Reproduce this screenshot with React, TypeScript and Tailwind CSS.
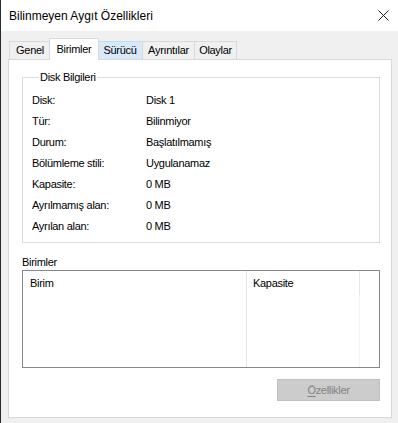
import React from "react";

const rows: [string, string][] = [
  ["Disk:", "Disk 1"],
  ["Tür:", "Bilinmiyor"],
  ["Durum:", "Başlatılmamış"],
  ["Bölümleme stili:", "Uygulanamaz"],
  ["Kapasite:", "0 MB"],
  ["Ayrılmamış alan:", "0 MB"],
  ["Ayrılan alan:", "0 MB"],
];

const tabs = [
  { name: "Genel", w: "w-[42px]", state: "normal" },
  { name: "Birimler", w: "w-[50px]", state: "active" },
  { name: "Sürücü", w: "w-[46px]", state: "hover" },
  { name: "Ayrıntılar", w: "w-[53px]", state: "normal" },
  { name: "Olaylar", w: "w-[43px]", state: "normal" },
];

const CloseIcon = () => (
  <svg width="11" height="11" viewBox="0 0 11 11" className="text-[#1a1a1a]">
    <path d="M0.5 0.5 L10.5 10.5 M10.5 0.5 L0.5 10.5" stroke="currentColor" strokeWidth="1" fill="none" />
  </svg>
);

export default function App() {
  return (
    <div
      className="w-[398px] h-[423px] overflow-hidden bg-[#f0f0f0] border-l border-[#2b2b2b] text-[11px] tracking-[-0.3px] text-black"
      style={{ fontFamily: '"Liberation Sans", Arial, sans-serif' }}
    >
      {/* title bar */}
      <div className="h-[31px] bg-white flex items-center justify-between pl-[8px] pr-[9px]">
        <span className="text-[12px] tracking-normal">Bilinmeyen Aygıt Özellikleri</span>
        <CloseIcon />
      </div>

      <div className="pl-[7px] pr-[6px]">
        {/* tabs */}
        <div className="h-[28px] flex items-end pl-px">
          {tabs.map((t, i) => {
            if (t.state === "active") {
              return (
                <div
                  key={t.name}
                  className={`${t.w} relative z-10 -ml-[2px] -mr-[1px] h-[22px] -mb-px bg-white border border-b-0 border-[#d9d9d9] flex justify-center pt-[2px]`}
                >
                  {t.name}
                </div>
              );
            }
            return (
              <div
                key={t.name}
                className={`${t.w} ${i > 0 ? "-ml-px" : ""} h-[18px] border border-b-0 flex items-center justify-center ${
                  t.state === "hover" ? "bg-[#d8eaf9] border-[#c0dcf3]" : "bg-[#f0f0f0] border-[#d9d9d9]"
                }`}
              >
                {t.name}
              </div>
            );
          })}
        </div>

        {/* panel */}
        <div className="h-[359px] bg-white border border-[#d9d9d9] pl-[13px] pr-[11px] pt-[9px]">
          <fieldset className="border border-[#dcdcdc] pl-[9px] pb-[5px]">
            <legend className="ml-[7px] px-[1px] leading-[16px]">Disk Bilgileri</legend>
            <div className="pt-[5px]">
              {rows.map(([k, v]) => (
                <div key={k} className="h-[21px] flex items-center">
                  <span className="w-[114px]">{k}</span>
                  <span>{v}</span>
                </div>
              ))}
            </div>
          </fieldset>

          <div className="mt-[11px] leading-[16px]">Birimler</div>

          <div className="h-[98px] border border-[#828790] flex">
            <div className="w-[224px] flex flex-col border-r border-[#e5e5e5]">
              <div className="h-[24px] flex items-center pl-[7px]">Birim</div>
              <div className="flex-1" />
            </div>
            <div className="w-[113px] flex flex-col">
              <div className="h-[24px] flex items-center pl-[6px] border-r border-[#e5e5e5]">Kapasite</div>
              <div className="flex-1 border-r border-[#eef5fc]" />
            </div>
            <div className="flex-1" />
          </div>

          <div className="mt-[11px] flex justify-end">
            <button
              disabled
              className="w-[103px] h-[22px] bg-[#cccccc] border border-[#bfbfbf] text-[#838383] flex items-center justify-center"
            >
              <span>
                <span className="underline underline-offset-2">Ö</span>zellikler
              </span>
            </button>
          </div>
        </div>
      </div>
    </div>
  );
}
